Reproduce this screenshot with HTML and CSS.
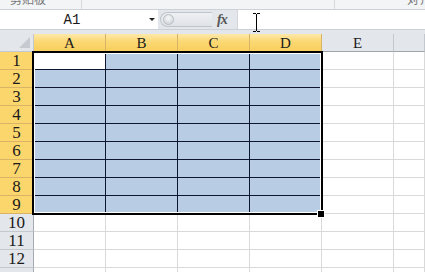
FILE: index.html
```html
<!doctype html>
<html lang="zh-CN">
<head>
  <meta charset="utf-8" />
  <meta name="viewport" content="width=device-width,initial-scale=1" />
  <title>Sheet1</title>
  <link rel="stylesheet" href="styles.css">
</head>
<body>
  <div class="ribbon">
    <div class="grp g1"><span class="lbl">剪贴板</span></div>
    <div class="grp g2"></div>
    <div class="grp g3"><span class="lbl">对齐方式</span></div>
  </div>

  <div class="fbar">
    <div class="namebox">
      <span class="ref">A1</span>
      <span class="drop"></span>
    </div>
    <div class="fxarea">
      <span class="grip"><span class="knob"></span></span>
      <span class="fx">fx</span>
    </div>
    <div class="finput"></div>
    <!-- mouse cursor over the formula input -->
    <svg class="ibeam" width="9" height="19" viewBox="0 0 9 19">
      <path d="M1 0.5h3M5 0.5h3M4.5 1v17M1 18.5h3M5 18.5h3" stroke="#000" stroke-width="1" fill="none"/>
    </svg>
  </div>
  <div class="fgap"></div>

  <div class="sheet">
    <div class="grid" id="grid"></div>
    <div class="selbox"></div>
    <div class="handle"></div>
  </div>

  <script>
    (function(){
      const grid = document.getElementById('grid');
      const cols = ['A','B','C','D','E',''];
      const rows = 13;

      function add(cls, text) {
        const d = document.createElement('div');
        d.className = cls;
        if (text) d.textContent = text;
        grid.appendChild(d);
      }

      // header row
      add('corner');
      cols.forEach(function(c, i){
        add('hd' + (i < 4 ? ' sel' : ''), c);
      });

      // body rows (row 13 is only a sliver at the bottom, no label shows)
      for (let r = 1; r <= rows; r++) {
        const inSel = r <= 9;
        add('rh' + (inSel ? ' sel' : ''), r < 13 ? String(r) : '');
        cols.forEach(function(c, i){
          let cls = 'c';
          if (inSel && i < 4) cls += (r === 1 && i === 0) ? ' act' : ' in';
          add(cls);
        });
      }
    })();
  </script>
</body>
</html>
```

FILE: styles.css
```css
:root{
  --gray:#e3e6ea;
  --line:#c3c8cf;
  --grid:#d9d9d9;
  --sel:#b8cce4;
  --yellow:#fbd66c;
  --tan:#d9b466;
  --ink:#1a1a1a;
}
html,body{margin:0;height:100%;}
body{width:425px;height:272px;overflow:hidden;background:#fff;font-family:"Liberation Serif","Times New Roman",serif;color:var(--ink);}

/* ribbon bottom edge */
.ribbon{display:flex;height:10px;background:#f3f4f6;border-bottom:1px solid #cdd1d7;overflow:hidden;box-sizing:border-box;}
.grp{border-right:1px solid #d6d9de;box-sizing:border-box;overflow:hidden;}
.g1{width:82px;padding-left:10px;}
.g2{width:253px;}
.g3{flex:1;padding-left:72px;border-right:0;}
.lbl{display:block;margin-top:-8px;font:12px/14px "Noto Sans CJK SC",sans-serif;color:#777;white-space:nowrap;}

/* formula bar */
.fbar{position:relative;display:flex;height:19px;background:var(--gray);border-bottom:1px solid #cbd0d6;}
.namebox{width:158px;background:#fff;display:flex;align-items:center;box-sizing:border-box;}
.ref{width:140px;text-align:center;font-family:"Liberation Mono","Liberation Serif",serif;font-size:14px;line-height:18px;padding-left:2px;}
.drop{width:0;height:0;margin-left:7px;border-left:3px solid transparent;border-right:3px solid transparent;border-top:3px solid #222;}
.fxarea{width:79px;display:flex;align-items:center;}
.grip{width:52px;height:15px;margin-left:2px;border:1px solid #c0c5cc;border-right:0;border-radius:8px 0 0 8px;background:linear-gradient(#eef0f3,#dfe2e6);display:flex;align-items:center;box-sizing:border-box;}
.knob{width:11px;height:11px;margin-left:2px;border-radius:50%;background:radial-gradient(circle at 50% 35%,#f7f8f9,#c9cdd2);border:1px solid #b9bec5;box-sizing:border-box;}
.fx{margin-left:5px;font:italic bold 14px/18px "Liberation Serif",serif;color:#555;letter-spacing:-1px;}
.finput{flex:1;background:#fff;border-left:1px solid #d2d6db;}
.ibeam{position:absolute;left:252px;top:3px;}
.fgap{height:4px;background:var(--gray);}

/* sheet */
.sheet{position:relative;}
.grid{display:grid;grid-template-columns:34px repeat(5,72px) 1fr;grid-auto-rows:18px;}
.grid > div{box-sizing:border-box;border-right:1px solid var(--grid);border-bottom:1px solid var(--grid);}
.corner{background:var(--gray);position:relative;}
.grid > .corner{border-right:1px solid var(--line);border-bottom:1px solid var(--line);}
.corner::after{content:"";position:absolute;right:3px;bottom:3px;border-left:11px solid transparent;border-bottom:11px solid #c6cad0;}
.grid > .hd{background:var(--gray);border-right:1px solid var(--line);border-bottom:1px solid #9ea3aa;text-align:center;font-size:15px;line-height:18px;}
.grid > .hd.sel{background:linear-gradient(#fde8a9,#fbd873 45%,#f8cf5e);border-right:1px solid var(--tan);border-bottom:1px solid #000;}
.grid > .rh{background:var(--gray);border-right:1px solid #a6abb2;border-bottom:1px solid var(--line);text-align:center;font-size:17px;line-height:18px;}
.grid > .rh.sel{background:var(--yellow);border-right:1px solid #000;border-bottom:1px solid var(--tan);}
.grid > .c.in{background:var(--sel);border-right:1px solid #0d1530;border-bottom:1px solid #0d1530;}
.grid > .c.act{background:#fff;border-right:1px solid #0d1530;border-bottom:1px solid #0d1530;}

/* selection outline and fill handle */
.selbox{position:absolute;left:32px;top:17px;width:291px;height:164px;border:2px solid #000;box-shadow:inset 0 0 0 1px #fff;box-sizing:border-box;pointer-events:none;}
.handle{position:absolute;left:317px;top:176px;width:8px;height:8px;background:#000;border:1px solid #fff;box-sizing:border-box;}
```
